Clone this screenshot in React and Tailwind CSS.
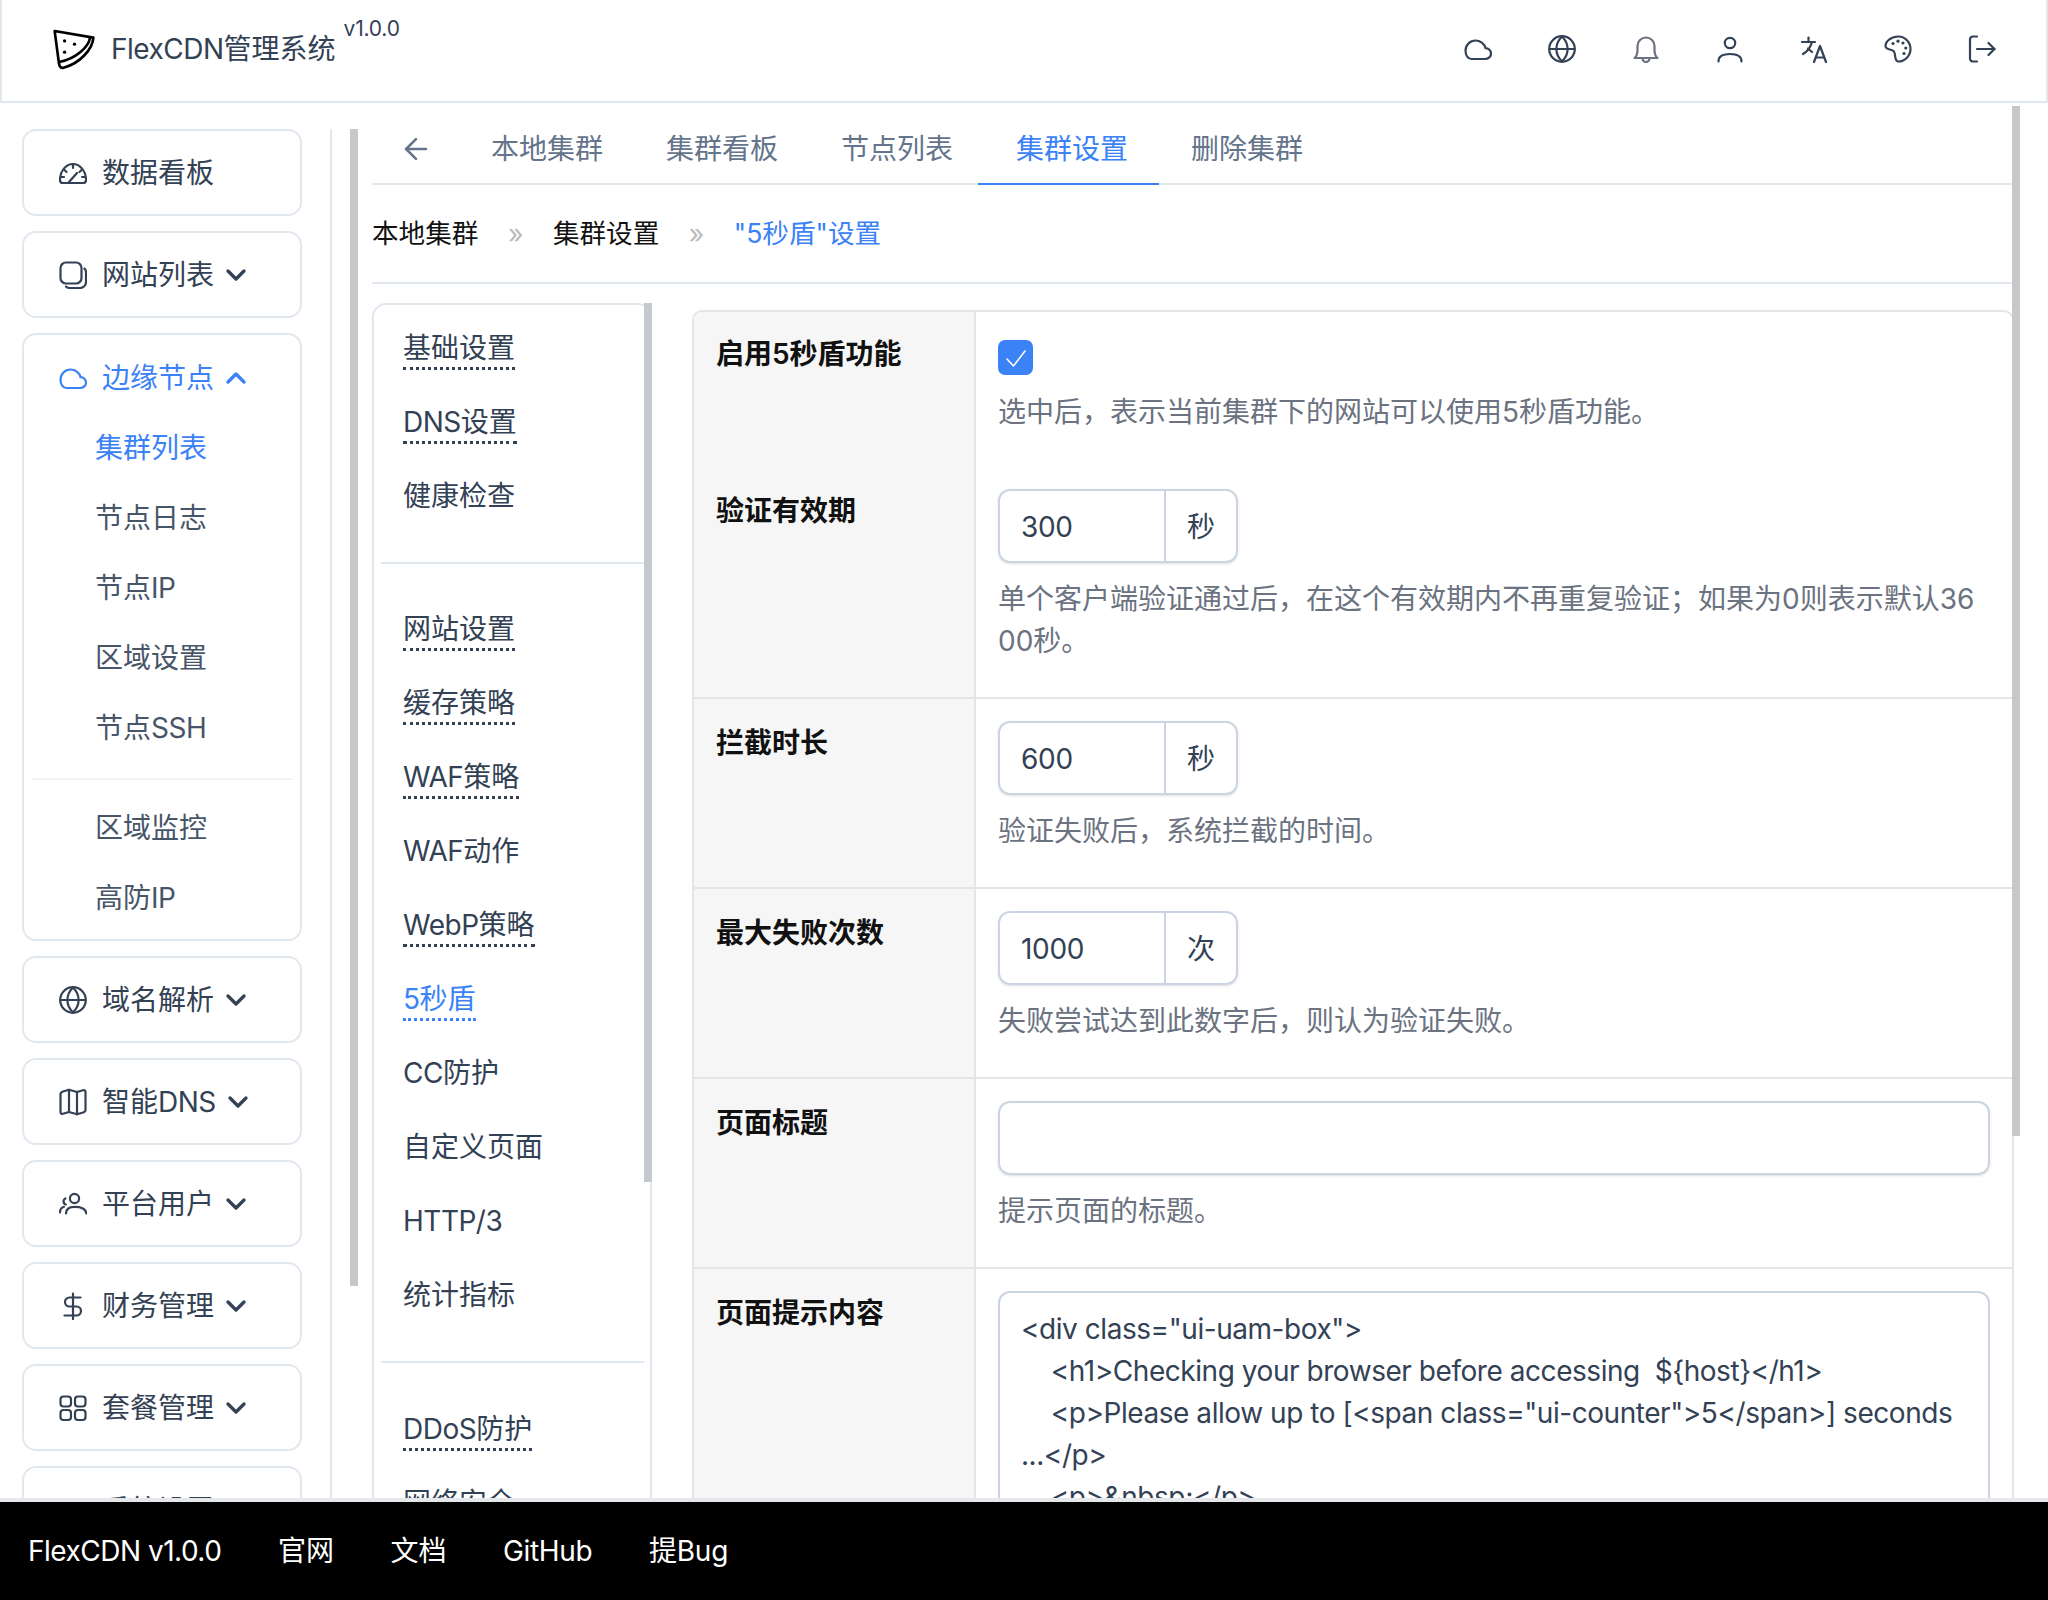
import React from 'react';
import { ArrowLeft, ChevronDown, ChevronUp } from 'lucide-react';

const Svg = ({ children, className = '' }) => (
  <svg viewBox="0 0 28 28" fill="none" stroke="currentColor" strokeWidth="2.2" strokeLinecap="round" strokeLinejoin="round" className={`w-[28px] h-[28px] shrink-0 ${className}`}>
    {children}
  </svg>
);

const CloudIcon = (props) => (
  <Svg {...props}><path d="M7.5 24 H21 C24.5 24 27 21.5 27 18.5 C27 15.5 24.5 13.2 21.5 13.2 C20.5 8.5 16 5.5 11.5 5.5 C6 5.5 1.5 10 1.5 15.5 C1.5 20.5 4 24 7.5 24 Z" /></Svg>
);
const GlobeIcon = (props) => (
  <Svg {...props}>
    <circle cx="14" cy="14" r="12.8" />
    <path d="M1.5 14 H26.5" />
    <path d="M14 1.5 C6.5 9 6.5 19 14 26.5 C21.5 19 21.5 9 14 1.5 Z" />
  </Svg>
);
const BellIcon = (props) => (
  <Svg {...props}>
    <path d="M2.5 23 C5 21 5.5 18.5 5.5 15 V11 A8.5 8.5 0 0 1 22.5 11 V15 C22.5 18.5 23 21 25.5 23 Z" />
    <path d="M10.5 23.5 A3.5 3.5 0 0 0 17.5 23.5" />
  </Svg>
);
const UserIcon = (props) => (
  <Svg {...props}>
    <circle cx="14" cy="8" r="5.2" />
    <path d="M2.5 26.5 C2.5 20.5 8 19 14 19 C20 19 25.5 20.5 25.5 26.5" />
  </Svg>
);
const TranslateIcon = (props) => (
  <Svg {...props}>
    <path d="M2 7 H15" />
    <path d="M8.5 2.5 V7" />
    <path d="M12 7 C10.5 12.5 6.5 17 3 19" />
    <path d="M8 13.5 L12 17" />
    <path d="M14 27 L20 11 L26 27" />
    <path d="M16 22.5 H24" />
  </Svg>
);
const PaletteIcon = (props) => (
  <Svg {...props}>
    <path d="M14.5 1.5 C7.5 1.5 1.5 6 1.5 11 C1.5 15.5 8 13.5 10 16.5 C12 19.5 10 26.5 14.5 26.5 C21 26.5 26.5 20.5 26.5 14 C26.5 7.5 21 1.5 14.5 1.5 Z" />
    <g fill="currentColor" stroke="none">
      <circle cx="9" cy="8.5" r="1.6" />
      <circle cx="14" cy="6.2" r="1.6" />
      <circle cx="19" cy="8" r="1.6" />
      <circle cx="21.8" cy="13" r="1.6" />
      <circle cx="20" cy="18.5" r="1.6" />
    </g>
  </Svg>
);
const LogoutIcon = (props) => (
  <Svg {...props}>
    <path d="M9 1.5 H5 A3 3 0 0 0 2 4.5 V23.5 A3 3 0 0 0 5 26.5 H9" />
    <path d="M9 14 H26.5" />
    <path d="M20.5 8 L26.5 14 L20.5 20" />
  </Svg>
);
const GaugeIcon = (props) => (
  <Svg {...props}>
    <path d="M4 24 H24 C26 24 27 23 27 21 C27 12 21 5 14 5 C7 5 1 12 1 21 C1 23 2 24 4 24 Z" />
    <path d="M10 23 L18 14" />
    <path d="M14 6 V9" />
    <path d="M5.5 11 L7.5 13" />
    <path d="M22.5 11 L20.5 13" />
    <path d="M2 18 H5" />
    <path d="M23 18 H26" />
  </Svg>
);
const CopyIcon = (props) => (
  <Svg {...props}>
    <rect x="1.5" y="1.5" width="21" height="21" rx="5.5" />
    <path d="M25.5 7.5 C26.5 8.5 27 10 27 11.5 V21 A6 6 0 0 1 21 27 H11 C9.5 27 8 26.5 7 25.5" />
  </Svg>
);
const MapIcon = (props) => (
  <Svg {...props}>
    <path d="M1.5 6 C1.5 4.5 2.5 4 4 3.5 L10 1.8 L18 4 L24 2.2 C25.5 1.8 26.5 2.5 26.5 4 V22 C26.5 23.5 25.5 24 24 24.5 L18 26.3 L10 24 L4 25.8 C2.5 26.2 1.5 25.5 1.5 24 Z" />
    <path d="M10 1.8 V24" />
    <path d="M18 4 V26.3" />
  </Svg>
);
const UsersIcon = (props) => (
  <Svg {...props} >
    <circle cx="15.5" cy="8.5" r="4.6" />
    <path d="M7 23.5 C7 18.5 11 16.8 15.5 16.8 C21 16.8 27 18.5 27.3 23.5" />
    <path d="M6.5 8.5 A3.2 3.2 0 0 0 6.8 14.5" />
    <path d="M1 22.5 C1 19.5 2.5 17.5 5 16.8" />
  </Svg>
);
const DollarIcon = (props) => (
  <Svg {...props}>
    <path d="M21.5 5.5 H10.5 A4.5 4.5 0 0 0 10.5 14.5 H17.5 A4.5 4.5 0 0 1 17.5 23.5 H5.5" />
    <path d="M14 1.5 V27" />
  </Svg>
);
const GridIcon = (props) => (
  <Svg {...props}>
    <rect x="1.5" y="2.5" width="10.5" height="10" rx="3" />
    <rect x="16" y="2.5" width="10.5" height="10" rx="3" />
    <rect x="1.5" y="16" width="10.5" height="10" rx="3" />
    <rect x="16" y="16" width="10.5" height="10" rx="3" />
  </Svg>
);
const CogIcon = (props) => (
  <Svg {...props}><circle cx="14" cy="14" r="8" /></Svg>
);

const Logo = () => (
  <svg viewBox="0 0 130 125" fill="none" stroke="#000" strokeWidth="8" strokeLinecap="round" strokeLinejoin="round" className="w-[43px] h-[42px] ml-[14px] shrink-0">
    <path d="M5 8 L122 28 C120 62 82 106 32 119 C24 121 19 116 18 106 Z" />
    <path d="M112 28 C108 56 70 92 19 102" />
    <g fill="#000" stroke="none">
      <circle cx="35" cy="38" r="5" />
      <circle cx="65" cy="48" r="5" />
      <circle cx="35" cy="72" r="5" />
    </g>
  </svg>
);

const T = ({ children }) =>
  children.split(/([\x00-\x7f]+)/).map((part, i) =>
    i % 2 ? <span key={i} className="tracking-[-0.5px]">{part}</span> : part
  );

const navTop = [
  { label: '数据看板', Icon: GaugeIcon, arrow: false },
  { label: '网站列表', Icon: CopyIcon, arrow: true },
];
const navBottom = [
  { label: '域名解析', Icon: GlobeIcon },
  { label: '智能DNS', Icon: MapIcon },
  { label: '平台用户', Icon: UsersIcon },
  { label: '财务管理', Icon: DollarIcon },
  { label: '套餐管理', Icon: GridIcon },
  { label: '系统设置', Icon: CogIcon },
];

const NavButton = ({ label, Icon, arrow = true }) => (
  <div className="h-[87px] shrink-0 border-2 border-[#e2e8f0] rounded-[14px] flex items-center pl-[35px] pt-[1px] gap-[15px] text-[#334155]">
    <Icon />
    <span><T>{label}</T></span>
    {arrow && <ChevronDown className="w-[32px] h-[32px] -ml-[9px]" strokeWidth={2.5} />}
  </div>
);

const tabs = ['本地集群', '集群看板', '节点列表', '集群设置', '删除集群'];

const menuGroups = [
  [['基础设置', true], ['DNS设置', true], ['健康检查', false]],
  [['网站设置', true], ['缓存策略', true], ['WAF策略', true], ['WAF动作', false], ['WebP策略', true], ['5秒盾', true, true], ['CC防护', false], ['自定义页面', false], ['HTTP/3', false], ['统计指标', false]],
  [['DDoS防护', true], ['网络安全', true]],
];

const MenuItem = ({ label, dotted, active }) => (
  <div className="h-[74px] flex items-center pl-[29px]">
    <span className={`leading-[38px] border-b-[3px] border-dotted ${active ? 'text-[#3b82f6] border-[#3b82f6]' : 'text-[#334155]'} ${dotted ? (active ? '' : 'border-[#334155]') : 'border-transparent'}`}><T>{label}</T></span>
  </div>
);

const InputGroup = ({ value, unit }) => (
  <div className="flex w-[240px] h-[74px] border-2 border-[#cbd5e1] rounded-[12px] shadow-sm text-[#334155]">
    <input readOnly defaultValue={value} className="w-[166px] border-r-2 border-[#cbd5e1] pl-[21px] pt-[2px] outline-none bg-transparent tracking-[-0.3px]" />
    <div className="flex-1 flex items-center justify-center pt-[2px]">{unit}</div>
  </div>
);

const Row = ({ label, children, line = true, first = false }) => (
  <div className={`flex ${line ? 'border-b-2 border-[#e5e5e5]' : ''}`}>
    <div className={`w-[282px] shrink-0 bg-[#f6f6f6] border-r-2 border-[#e5e5e5] pl-[22px] font-semibold text-[#111] ${first ? 'pt-[21px]' : 'pt-[23px]'}`}>{label}</div>
    <div className="flex-1 pl-[22px] pr-[22px] pt-[22px] pb-[35px] text-[#6b7280]">{children}</div>
  </div>
);

const codeText = `<div class="ui-uam-box">
    <h1>Checking your browser before accessing  \${host}</h1>
    <p>Please allow up to [<span class="ui-counter">5</span>] seconds ...</p>
    <p>&nbsp;</p>
</div>`;

export default function App() {
  return (
    <div className="w-full h-[1600px] flex flex-col overflow-hidden bg-white text-[28px] leading-[42px] font-['Inter','Noto_Sans_CJK_SC',sans-serif]">
      <header className="h-[103px] shrink-0 flex items-center border-x-2 border-b-2 border-[#e2e8f0] pl-[37px] pr-[50px] pb-[3px]">
        <Logo />
        <span className="ml-[15px] text-[#334155]"><T>FlexCDN管理系统</T></span>
        <span className="ml-[8px] self-start mt-[16px] text-[21px] leading-[26px] tracking-[-0.2px] text-[#334155]">v1.0.0</span>
        <div className="ml-auto flex items-center gap-[56px] text-[#334155]">
          <CloudIcon />
          <GlobeIcon />
          <BellIcon className="text-[#6b7280]" />
          <UserIcon />
          <TranslateIcon />
          <PaletteIcon />
          <LogoutIcon />
        </div>
      </header>

      <main className="flex-1 min-h-0 flex relative overflow-hidden">
        <aside className="w-[280px] ml-[22px] shrink-0 mt-[26px] flex flex-col gap-[15px]">
          {navTop.map((n) => (
            <NavButton key={n.label} label={n.label} Icon={n.Icon} arrow={n.arrow} />
          ))}
          <div className="shrink-0 border-2 border-[#e2e8f0] rounded-[14px] pb-[6px]">
            <div className="h-[85px] flex items-center pl-[35px] gap-[15px] text-[#3b82f6]">
              <CloudIcon />
              <span>边缘节点</span>
              <ChevronUp className="w-[32px] h-[32px] -ml-[9px]" strokeWidth={2.5} />
            </div>
            <div className="-mt-[7px] text-[#475569]">
              {['集群列表', '节点日志', '节点IP', '区域设置', '节点SSH'].map((s, i) => (
                <div key={s} className={`h-[70px] flex items-center pl-[71px] ${i === 0 ? 'text-[#3b82f6]' : ''}`}><span><T>{s}</T></span></div>
              ))}
              <div className="h-[2px] mx-[7px] mt-[15px] mb-[13px] bg-[#f1f5f9]"></div>
              {['区域监控', '高防IP'].map((s) => (
                <div key={s} className="h-[70px] flex items-center pl-[71px]"><span><T>{s}</T></span></div>
              ))}
            </div>
          </div>
          {navBottom.map((n) => (
            <NavButton key={n.label} label={n.label} Icon={n.Icon} />
          ))}
        </aside>

        <div className="w-[2px] ml-[28px] mt-[26px] shrink-0 bg-[#e2e8f0]"></div>
        <div className="w-[8px] ml-[18px] mt-[26px] h-[1157px] shrink-0 bg-[#c8c8c8]"></div>

        <div className="flex-1 min-w-0 ml-[14px] mr-[34px] flex flex-col">
          <div className="h-[82px] shrink-0 border-b-2 border-[#e2e8f0] flex items-center pl-[27px] pt-[11px]">
            <ArrowLeft className="w-[34px] h-[34px] text-[#64748b]" strokeWidth={1.8} />
            <div className="flex ml-[24px] h-full items-center">
              {tabs.map((t) => (
                <div key={t} className={`w-[175px] pl-[34px] relative h-full flex items-center ${t === '集群设置' ? 'text-[#3b82f6]' : 'text-[#64748b]'}`}>
                  {t}
                  {t === '集群设置' && <span className="absolute -bottom-[2px] -left-[4px] w-[181px] h-[2px] bg-[#3b82f6]"></span>}
                </div>
              ))}
            </div>
          </div>

          <div className="h-[99px] shrink-0 border-b-2 border-[#e2e8f0] flex items-center gap-[29.5px] pb-[2px] text-[26.6px] text-[#111]">
            <span>本地集群</span>
            <span className="text-[#bbbbbb]">»</span>
            <span>集群设置</span>
            <span className="text-[#bbbbbb]">»</span>
            <span className="text-[#3b82f6]">"5秒盾"设置</span>
          </div>

          <div className="flex-1 min-h-0 flex items-start">
            <div className="w-[280px] shrink-0 mt-[19px] relative border-2 border-[#e2e8f0] rounded-t-[14px] pt-[7px]">
              <div className="absolute -top-[2px] -right-[2px] w-[8px] h-[879px] bg-[#c5c8cd]"></div>
              {menuGroups.map((group, gi) => (
                <div key={gi}>
                  {gi > 0 && <div className="h-[2px] ml-[7px] w-[263px] mt-[27.5px] mb-[30px] bg-[#e2e8f0]"></div>}
                  {group.map(([label, dotted, active]) => (
                    <MenuItem key={label} label={label} dotted={dotted} active={active} />
                  ))}
                </div>
              ))}
            </div>

            <div className="flex-1 min-w-0 ml-[40px] mt-[26px] border-2 border-[#e5e5e5] rounded-t-[10px] overflow-hidden">
              <Row label="启用5秒盾功能" line={false} first>
                <div className="w-[35px] h-[35px] mt-[6px] rounded-[7px] bg-[#3b82f6] flex items-center justify-center">
                  <svg viewBox="0 0 24 24" className="w-[24px] h-[24px]" fill="none" stroke="#fff" strokeWidth="1.6" strokeLinecap="round" strokeLinejoin="round">
                    <path d="M3 13 L9.5 20 L21 5" />
                  </svg>
                </div>
                <p className="mt-[16px] -mb-[1px]">选中后，表示当前集群下的网站可以使用5秒盾功能。</p>
              </Row>
              <Row label="验证有效期">
                <InputGroup value="300" unit="秒" />
                <p className="mt-[15px] break-all">单个客户端验证通过后，在这个有效期内不再重复验证；如果为0则表示默认3600秒。</p>
              </Row>
              <Row label="拦截时长">
                <InputGroup value="600" unit="秒" />
                <p className="mt-[15px]">验证失败后，系统拦截的时间。</p>
              </Row>
              <Row label="最大失败次数">
                <InputGroup value="1000" unit="次" />
                <p className="mt-[15px]">失败尝试达到此数字后，则认为验证失败。</p>
              </Row>
              <Row label="页面标题">
                <input readOnly className="block w-full h-[74px] border-2 border-[#cbd5e1] rounded-[12px] shadow-sm outline-none" />
                <p className="mt-[15px]">提示页面的标题。</p>
              </Row>
              <Row label="页面提示内容" line={false}>
                <textarea readOnly defaultValue={codeText} className="block w-full h-[420px] px-[21px] pt-[15px] border-2 border-[#cbd5e1] rounded-[12px] outline-none resize-none overflow-hidden text-[#334155] tracking-[-0.45px]" />
              </Row>
            </div>
          </div>
        </div>

        <div className="absolute top-[3px] right-[28px] w-[8px] h-[1030px] bg-[#c8c8c8]"></div>
      </main>

      <footer className="h-[102px] shrink-0 border-t-4 border-[#e5e7eb] bg-black text-white flex items-center gap-[56.5px] pl-[28px]">
        <span><T>FlexCDN v1.0.0</T></span>
        <span>官网</span>
        <span>文档</span>
        <span className="tracking-[-0.3px]">GitHub</span>
        <span className="tracking-[-0.2px]">提Bug</span>
      </footer>
    </div>
  );
}
